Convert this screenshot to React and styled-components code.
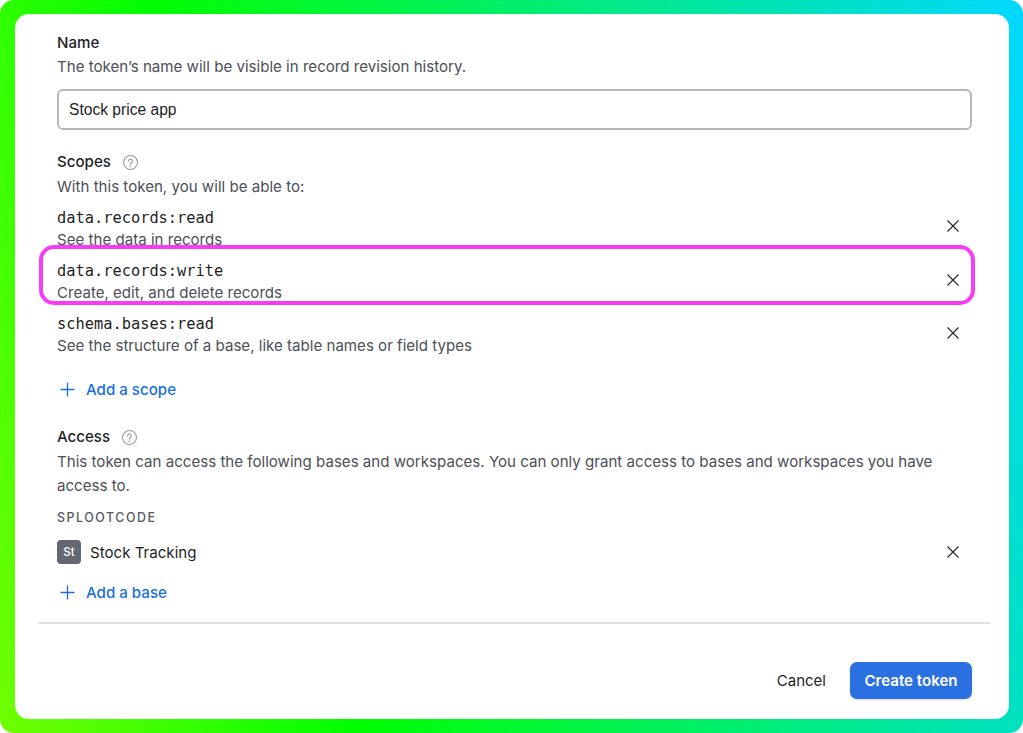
import React from "react";
import styled, { createGlobalStyle } from "styled-components";

const Global = createGlobalStyle`
  html, body { margin: 0; padding: 0; background: #fff; }
  body { font-family: Inter, "Liberation Sans", sans-serif; }
`;

const Frame = styled.div`
  box-sizing: border-box;
  width: 1023px;
  height: 733px;
  padding: 14px 14px 14px 15px;
  border-radius: 14px;
  overflow: hidden;
  background: linear-gradient(74deg, #70ff00 0%, #00ff00 29%, #00d8ff 100%);
`;

const Card = styled.div`
  box-sizing: border-box;
  height: 705px;
  padding: 19px 37px 0 42px;
  background: #fff;
  border-radius: 14px;
`;

const Heading = styled.div`
  display: flex;
  align-items: center;
  gap: 11px;
  height: 20px;
  margin-top: ${p => p.$top || 0}px;
  font-size: 15.1px;
  font-weight: 500;
  line-height: 20px;
  color: #1d1f25;
`;

const Help = styled.svg`
  width: 17px;
  height: 17px;
  fill: none;
  stroke: #9a9a9a;
  stroke-width: 1.1;
  stroke-linecap: round;
`;

const Description = styled.div`
  margin-top: ${p => p.$top || 0}px;
  font-size: 15.1px;
  line-height: ${p => p.$line || 20}px;
  color: #4c4f57;
`;

const NameInput = styled.div`
  box-sizing: border-box;
  height: 41px;
  margin-top: 12px;
  padding-left: 10px;
  display: flex;
  align-items: center;
  border: 2px solid #b6b6b6;
  border-radius: 6px;
  font-family: "Liberation Sans", Arial, sans-serif;
  font-size: 15.6px;
  color: #1d1f25;
`;

const ScopeList = styled.div`
  display: flex;
  flex-direction: column;
  gap: 10px;
  margin-top: 10px;
`;

const ScopeRow = styled.div`
  position: relative;
  display: flex;
  align-items: center;
  justify-content: space-between;
`;

const ScopeName = styled.div`
  font-family: "DejaVu Sans Mono", "Liberation Mono", monospace;
  font-size: 15.35px;
  line-height: 20px;
  padding-top: 1px;
  margin-bottom: 2px;
  color: #1d1f25;
`;

const Highlight = styled.div`
  position: absolute;
  top: -15px;
  right: -3px;
  bottom: -2px;
  left: -18px;
  border: 4px solid #f83cf6;
  border-radius: 15px;
  pointer-events: none;
`;

const Remove = styled.svg`
  flex: none;
  width: 12px;
  height: 12px;
  margin: 0 13px ${p => p.$lift || 0}px 0;
  stroke: #26282d;
  stroke-width: 1.15;
  fill: none;
`;

const AddLink = styled.div`
  display: flex;
  align-items: center;
  gap: 11px;
  height: 20px;
  margin-top: ${p => p.$top}px;
  padding-left: 3px;
  font-size: 15.1px;
  font-weight: 500;
  color: #166ee1;
`;

const Plus = styled.svg`
  width: 15px;
  height: 15px;
  stroke: #166ee1;
  stroke-width: 1.3;
  fill: none;
`;

const Workspace = styled.div`
  margin-top: 10px;
  font-size: 12.4px;
  font-weight: 500;
  line-height: 20px;
  letter-spacing: 1.55px;
  color: #55585f;
`;

const BaseRow = styled.div`
  display: flex;
  align-items: center;
  height: 24px;
  margin-top: 12px;
  font-size: 15.1px;
  color: #1d1f25;
`;

const BaseIcon = styled.div`
  width: 24px;
  height: 24px;
  margin-right: 9px;
  border-radius: 4px;
  background: #636771;
  color: #fff;
  display: flex;
  align-items: center;
  justify-content: center;
  font-size: 11.5px;
  font-weight: 500;
`;

const BaseName = styled.div`
  flex: 1;
`;

const Divider = styled.div`
  height: 2px;
  margin: 20px -18px 0 -19px;
  background: #e0e0e0;
`;

const Footer = styled.div`
  display: flex;
  justify-content: flex-end;
  align-items: center;
  gap: 24px;
  margin-top: 38px;
`;

const CancelLink = styled.div`
  font-size: 15px;
  font-weight: 400;
  color: #1d1f25;
`;

const PrimaryButton = styled.div`
  width: 122px;
  height: 37px;
  display: flex;
  align-items: center;
  justify-content: center;
  border-radius: 7px;
  background: #2a70e0;
  box-shadow: 0 1px 2px rgba(0, 0, 0, 0.15);
  color: #fff;
  font-size: 15.1px;
  font-weight: 600;
`;

const HelpIcon = () => (
  <Help viewBox="0 0 17 17">
    <circle cx="8.5" cy="8.5" r="7" />
    <path d="M6.6 6.9a1.9 1.9 0 1 1 3 1.6c-.7.5-1.1.8-1.1 1.7" />
    <path d="M8.5 12.1v.3" />
  </Help>
);

const XIcon = ({ lift }) => (
  <Remove viewBox="0 0 12 12" $lift={lift}>
    <path d="M.5.5l11 11M11.5.5l-11 11" />
  </Remove>
);

const PlusIcon = () => (
  <Plus viewBox="0 0 15 15">
    <path d="M7.5.5v14M.5 7.5h14" />
  </Plus>
);

const scopes = [
  { name: "data.records:read", text: "See the data in records", lift: 5 },
  { name: "data.records:write", text: "Create, edit, and delete records", lift: 3, marked: true },
  { name: "schema.bases:read", text: "See the structure of a base, like table names or field types", lift: 3 },
];

export default function App() {
  return (
    <Frame>
      <Global />
      <Card>
        <Heading>Name</Heading>
        <Description $top={4}>The token’s name will be visible in record revision history.</Description>
        <NameInput>Stock price app</NameInput>

        <Heading $top={22}>Scopes <HelpIcon /></Heading>
        <Description $top={5}>With this token, you will be able to:</Description>
        <ScopeList>
          {scopes.map(s => (
            <ScopeRow key={s.name}>
              <div>
                <ScopeName>{s.name}</ScopeName>
                <Description>{s.text}</Description>
              </div>
              <XIcon lift={s.lift} />
              {s.marked && <Highlight />}
            </ScopeRow>
          ))}
        </ScopeList>
        <AddLink $top={23}><PlusIcon />Add a scope</AddLink>

        <Heading $top={28}>Access <HelpIcon /></Heading>
        <Description $top={3} $line={24}>
          This token can access the following bases and workspaces. You can only grant access to bases and workspaces you have access to.
        </Description>
        <Workspace>SPLOOTCODE</Workspace>
        <BaseRow>
          <BaseIcon>St</BaseIcon>
          <BaseName>Stock Tracking</BaseName>
          <XIcon />
        </BaseRow>
        <AddLink $top={18}><PlusIcon />Add a base</AddLink>
        <Divider />
        <Footer>
          <CancelLink>Cancel</CancelLink>
          <PrimaryButton>Create token</PrimaryButton>
        </Footer>
      </Card>
    </Frame>
  );
}
